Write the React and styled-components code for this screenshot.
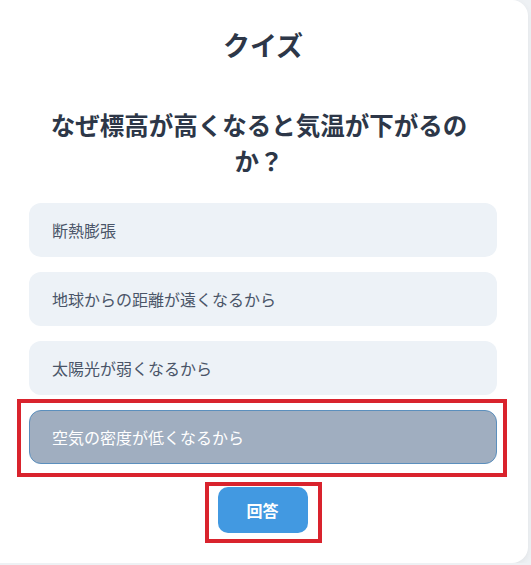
import React, { useState } from "react";
import styled, { createGlobalStyle } from "styled-components";

const GlobalStyle = createGlobalStyle`
  body {
    margin: 0;
    background: #eef1f4;
    font-family: "Noto Sans CJK JP", "Noto Sans", sans-serif;
  }
`;

const Card = styled.div`
  width: 528px;
  min-height: 563px;
  box-sizing: border-box;
  background: #ffffff;
  border-radius: 0 16px 16px 0;
  box-shadow: 0 2px 6px rgba(0, 0, 0, 0.06);
  padding: 27px 31px 0 29px;
  display: flex;
  flex-direction: column;
  align-items: center;
`;

const Title = styled.h1`
  margin: 0;
  font-size: 27px;
  line-height: 36px;
  font-weight: 700;
  color: #2d3748;
  text-align: center;
`;

const Question = styled.h2`
  margin: 44px 0 24px;
  font-size: 24.5px;
  line-height: 36px;
  font-weight: 700;
  color: #2d3748;
  text-align: center;
  padding: 0 20px 0 12px;
`;

const Options = styled.div`
  width: 100%;
  display: flex;
  flex-direction: column;
  gap: 15px;
`;

// red annotation frame drawn around the chosen answer
const OptionFrame = styled.div`
  border: 4px solid ${(p) => (p.$on ? "#d9232d" : "transparent")};
  padding: ${(p) => (p.$on ? "7px 6px 9px 8px" : "0")};
  margin: ${(p) => (p.$on ? "-11px -10px -13px -12px" : "0")};
  border-width: ${(p) => (p.$on ? "4px" : "0")};
`;

const Option = styled.button`
  display: block;
  width: 100%;
  height: 54px;
  box-sizing: border-box;
  text-align: left;
  padding: 0 22px;
  border-radius: 12px;
  font-family: inherit;
  font-size: 16px;
  cursor: pointer;
  border: 1px solid ${(p) => (p.$selected ? "#5b8fbd" : "transparent")};
  background: ${(p) => (p.$selected ? "#a0aec0" : "#edf2f7")};
  color: ${(p) => (p.$selected ? "#ffffff" : "#4a5568")};
`;

const Marker = styled.div`
  margin-top: 18px;
  border: 4px solid #d9232d;
  padding: 1px 10px 6px 9px;
  display: flex;
`;

const SubmitBtn = styled.button`
  width: 90px;
  height: 46px;
  border: none;
  border-radius: 10px;
  background: #4299e1;
  color: #ffffff;
  font-family: inherit;
  font-size: 16px;
  font-weight: 700;
  cursor: pointer;
`;

const choices = [
  "断熱膨張",
  "地球からの距離が遠くなるから",
  "太陽光が弱くなるから",
  "空気の密度が低くなるから",
];

export default function App() {
  const [selected, setSelected] = useState(3);

  return (
    <>
      <GlobalStyle />
      <Card>
        <Title>クイズ</Title>
        <Question>なぜ標高が高くなると気温が下がるのか？</Question>
        <Options>
          {choices.map((c, i) => (
            <OptionFrame key={c} $on={selected === i}>
              <Option $selected={selected === i} onClick={() => setSelected(i)}>
                {c}
              </Option>
            </OptionFrame>
          ))}
        </Options>
        <Marker>
          <SubmitBtn>回答</SubmitBtn>
        </Marker>
      </Card>
    </>
  );
}
